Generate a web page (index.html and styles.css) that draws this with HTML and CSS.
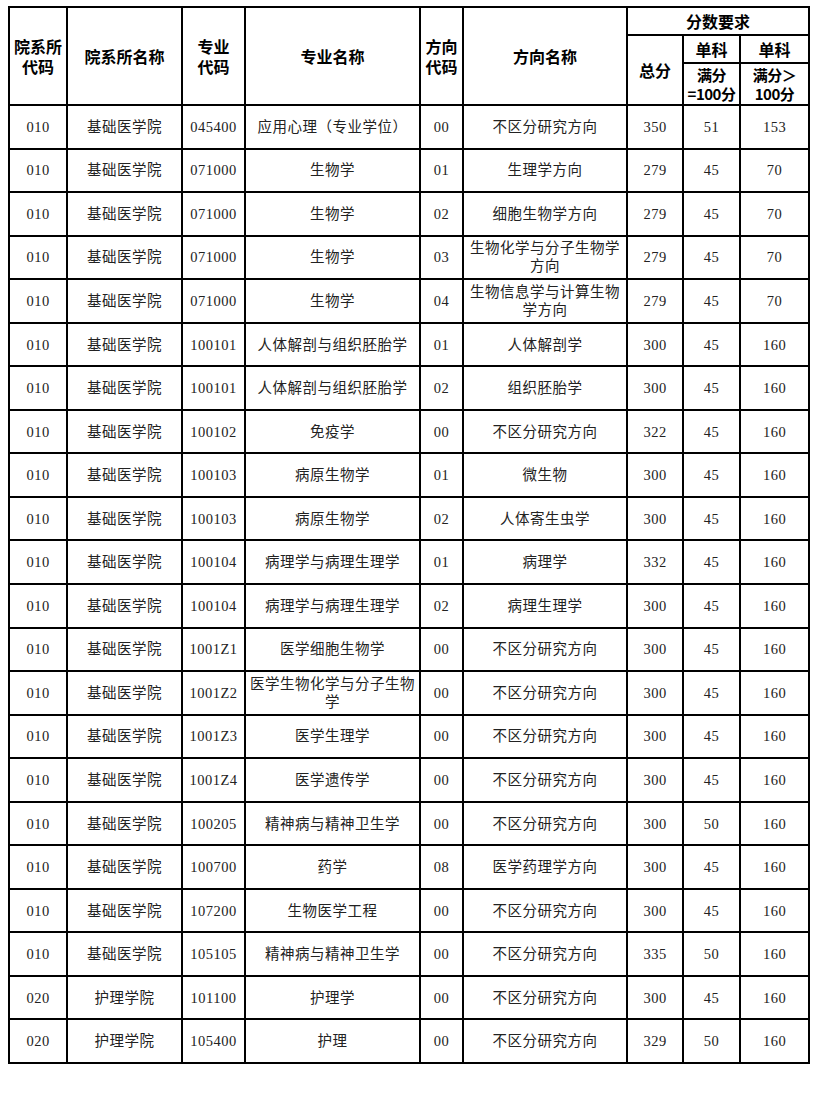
FILE: index.html
```html
<!DOCTYPE html>
<html lang="zh-CN">
<head>
<meta charset="utf-8">
<title>分数要求</title>
<link rel="stylesheet" href="styles.css">
</head>
<body>
<table class="grid">
<colgroup>
<col class="w1"><col class="w2"><col class="w3"><col class="w4"><col class="w5"><col class="w6"><col class="w7"><col class="w8"><col class="w9">
</colgroup>
<thead>
<tr class="hr1">
<th rowspan="3">院系所<br>代码</th>
<th rowspan="3">院系所名称</th>
<th rowspan="3">专业<br>代码</th>
<th rowspan="3">专业名称</th>
<th rowspan="3">方向<br>代码</th>
<th rowspan="3">方向名称</th>
<th colspan="3">分数要求</th>
</tr>
<tr class="hr2">
<th rowspan="2">总分</th>
<th>单科</th>
<th>单科</th>
</tr>
<tr class="hr3">
<th class="tight">满分<br>=100分</th>
<th class="tight">满分＞<br>100分</th>
</tr>
</thead>
<tbody>
<tr><td>010</td><td>基础医学院</td><td>045400</td><td>应用心理（专业学位）</td><td>00</td><td>不区分研究方向</td><td>350</td><td>51</td><td>153</td></tr>
<tr><td>010</td><td>基础医学院</td><td>071000</td><td>生物学</td><td>01</td><td>生理学方向</td><td>279</td><td>45</td><td>70</td></tr>
<tr><td>010</td><td>基础医学院</td><td>071000</td><td>生物学</td><td>02</td><td>细胞生物学方向</td><td>279</td><td>45</td><td>70</td></tr>
<tr><td>010</td><td>基础医学院</td><td>071000</td><td>生物学</td><td>03</td><td>生物化学与分子生物学方向</td><td>279</td><td>45</td><td>70</td></tr>
<tr><td>010</td><td>基础医学院</td><td>071000</td><td>生物学</td><td>04</td><td>生物信息学与计算生物学方向</td><td>279</td><td>45</td><td>70</td></tr>
<tr><td>010</td><td>基础医学院</td><td>100101</td><td>人体解剖与组织胚胎学</td><td>01</td><td>人体解剖学</td><td>300</td><td>45</td><td>160</td></tr>
<tr><td>010</td><td>基础医学院</td><td>100101</td><td>人体解剖与组织胚胎学</td><td>02</td><td>组织胚胎学</td><td>300</td><td>45</td><td>160</td></tr>
<tr><td>010</td><td>基础医学院</td><td>100102</td><td>免疫学</td><td>00</td><td>不区分研究方向</td><td>322</td><td>45</td><td>160</td></tr>
<tr><td>010</td><td>基础医学院</td><td>100103</td><td>病原生物学</td><td>01</td><td>微生物</td><td>300</td><td>45</td><td>160</td></tr>
<tr><td>010</td><td>基础医学院</td><td>100103</td><td>病原生物学</td><td>02</td><td>人体寄生虫学</td><td>300</td><td>45</td><td>160</td></tr>
<tr><td>010</td><td>基础医学院</td><td>100104</td><td>病理学与病理生理学</td><td>01</td><td>病理学</td><td>332</td><td>45</td><td>160</td></tr>
<tr><td>010</td><td>基础医学院</td><td>100104</td><td>病理学与病理生理学</td><td>02</td><td>病理生理学</td><td>300</td><td>45</td><td>160</td></tr>
<tr><td>010</td><td>基础医学院</td><td>1001Z1</td><td>医学细胞生物学</td><td>00</td><td>不区分研究方向</td><td>300</td><td>45</td><td>160</td></tr>
<tr><td>010</td><td>基础医学院</td><td>1001Z2</td><td>医学生物化学与分子生物学</td><td>00</td><td>不区分研究方向</td><td>300</td><td>45</td><td>160</td></tr>
<tr><td>010</td><td>基础医学院</td><td>1001Z3</td><td>医学生理学</td><td>00</td><td>不区分研究方向</td><td>300</td><td>45</td><td>160</td></tr>
<tr><td>010</td><td>基础医学院</td><td>1001Z4</td><td>医学遗传学</td><td>00</td><td>不区分研究方向</td><td>300</td><td>45</td><td>160</td></tr>
<tr><td>010</td><td>基础医学院</td><td>100205</td><td>精神病与精神卫生学</td><td>00</td><td>不区分研究方向</td><td>300</td><td>50</td><td>160</td></tr>
<tr><td>010</td><td>基础医学院</td><td>100700</td><td>药学</td><td>08</td><td>医学药理学方向</td><td>300</td><td>45</td><td>160</td></tr>
<tr><td>010</td><td>基础医学院</td><td>107200</td><td>生物医学工程</td><td>00</td><td>不区分研究方向</td><td>300</td><td>45</td><td>160</td></tr>
<tr><td>010</td><td>基础医学院</td><td>105105</td><td>精神病与精神卫生学</td><td>00</td><td>不区分研究方向</td><td>335</td><td>50</td><td>160</td></tr>
<tr><td>020</td><td>护理学院</td><td>101100</td><td>护理学</td><td>00</td><td>不区分研究方向</td><td>300</td><td>45</td><td>160</td></tr>
<tr><td>020</td><td>护理学院</td><td>105400</td><td>护理</td><td>00</td><td>不区分研究方向</td><td>329</td><td>50</td><td>160</td></tr>
</tbody>
</table>
</body>
</html>
```

FILE: styles.css
```css
html, body {
  margin: 0;
  padding: 0;
  background: #fff;
}
body {
  padding: 6px 0 0 8px;
}
.grid {
  border-collapse: collapse;
  table-layout: fixed;
  width: 800px;
  border: 2px solid #000;
}
.w1 { width: 58px; }
.w2 { width: 115px; }
.w3 { width: 63px; }
.w4 { width: 175px; }
.w5 { width: 43px; }
.w6 { width: 164px; }
.w7 { width: 56px; }
.w8 { width: 57px; }
.w9 { width: 69px; }
.grid th, .grid td {
  border: 2px solid #000;
  text-align: center;
  vertical-align: middle;
  padding: 0 3px;
}
.grid th {
  font-family: "Noto Sans CJK SC", "Liberation Sans", sans-serif;
  font-weight: 700;
  font-size: 16px;
  line-height: 20px;
  color: #000;
  padding: 0;
  white-space: nowrap;
}
.grid th.tight {
  font-size: 15px;
  letter-spacing: -0.5px;
  line-height: 19px;
}
.hr1 th { height: 26px; }
.hr2 th { height: 26px; }
.hr3 th { height: 40px; }
.grid td {
  font-family: "Liberation Serif", "Noto Sans CJK SC", serif;
  font-size: 14.5px;
  letter-spacing: 0.5px;
  line-height: 18px;
  color: #222;
  height: 43.55px;
  box-sizing: border-box;
}
```
